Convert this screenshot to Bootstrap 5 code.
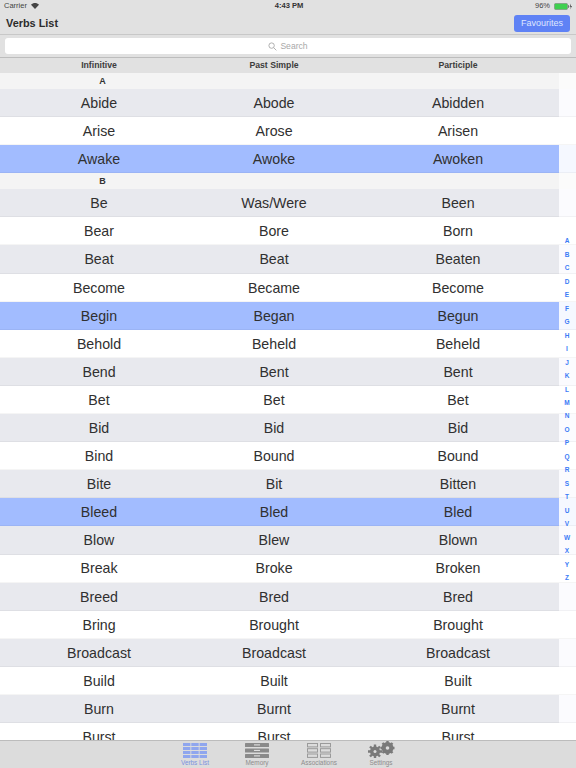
<!DOCTYPE html>
<html lang="en">
<head>
  <meta charset="UTF-8">
  <title>Verbs List</title>
  <meta name="viewport" content="width=device-width, initial-scale=1">
  <link href="https://cdn.jsdelivr.net/npm/bootstrap@5.3.3/dist/css/bootstrap.min.css" rel="stylesheet">
  <style>
    html, body { height: 768px; overflow: hidden; }
    body { font-family: "Liberation Sans", Arial, sans-serif; background: #fff; color: #222; position: relative; }
    .screen { height: 768px; }
    .top-area { background: #e1e1e1; }
    .status-line { height: 12px; padding: 0 4px; font-size: 7.5px; color: #444; }
    .status-line > div { flex: 1 1 0; }
    .status-time { font-weight: 700; font-size: 7.6px; text-align: center; color: #333; padding-left: 2px; }
    .title-line { height: 22px; padding: 0 6px; }
    .page-title { font-size: 10.9px; font-weight: 700; color: #2c2c2c; }
    .fav-btn { background: #5f82f5; color: #dfe7ff; font-size: 9px; width: 56px; height: 17px; border-radius: 3px; line-height: 17px; padding: 0; border: 0; }
    .search-line { background: #e1e1e1; border-top: 1px solid #c8c8c8; border-bottom: 1px solid #bdbdbd; height: 24px; padding: 3px 5px; }
    .search-box { background: #fff; height: 16px; border-radius: 3px; color: #a8a8a8; font-size: 8.6px; gap: 3px; }
    .col-heads { background: #e1e1e1; height: 15px; font-size: 8.7px; font-weight: 700; color: #3c3c3c; padding-right: 10px; }
    .list-wrap { flex: 1 1 0; overflow: hidden; min-height: 0; }
    .cell-a { width: 198px; text-align: center; }
    .cell-b { width: 152px; text-align: center; }
    .cell-c { width: 216px; text-align: center; }
    .verb-row { height: 28.1px; font-size: 14.2px; color: #303030; padding-right: 10px; line-height: 1; box-shadow: inset 0 -1px 0 rgba(0,0,0,.04); }
    .tone-grey { background: linear-gradient(to right, #e8e9ee 559px, #fbfbfe 559px); }
    .tone-white { background: #fff; }
    .tone-blue { background: linear-gradient(to right, #a2bcff 559px, #f5f8ff 559px); }
    .sect-row { height: 16px; background: linear-gradient(to right, #f4f4f4 559px, #fbfbfb 559px); font-size: 9px; font-weight: 700; color: #333; line-height: 17px; }
    .sect-row span { display: block; width: 205px; text-align: center; }
    .az-index { position: absolute; right: 5px; top: 234.4px; width: 8px; font-size: 6.5px; font-weight: 700; color: #3b7bf6; text-align: center; }
    .az-index div { height: 13.48px; line-height: 13.48px; }
    .tab-strip { height: 28px; background: #dcdcdc; border-top: 1px solid #bcbcbc; font-size: 6.4px; color: #8c8c8c; padding-left: 164px; }
    .tab-item { width: 62px; text-align: center; }
    .tab-item svg { display: block; margin: 2px auto 0; }
    .tab-item.on { color: #7a92e0; }
    .tab-label { line-height: 7px; margin-top: 1px; }
    .tab-item svg.gear-icon { margin-top: 0; }
  </style>
</head>
<body>
<div class="screen d-flex flex-column">
  <div class="top-area">
    <div class="status-line d-flex align-items-center">
      <div class="d-flex align-items-center gap-1">Carrier
        <svg width="8" height="6" viewBox="0 0 16 12"><path d="M8 12 L0 3.5 C4.5 -1 11.5 -1 16 3.5 Z" fill="#444"/></svg>
      </div>
      <div class="status-time">4:43 PM</div>
      <div class="d-flex align-items-center justify-content-end gap-1">96%
        <svg width="18" height="7" viewBox="0 0 18 7"><rect x=".5" y=".5" width="13" height="6" rx="1" fill="#3fd04f" stroke="#777" stroke-width=".5"/><rect x="14" y="2.2" width="1" height="2.6" fill="#777"/><path d="M17 .5 L15.6 3.8 H16.8 L16.2 6.5 L18 3 H16.8 Z" fill="#444"/></svg>
      </div>
    </div>
    <div class="title-line d-flex align-items-center justify-content-between">
      <div class="page-title">Verbs List</div>
      <button class="btn fav-btn">Favourites</button>
    </div>
    <div class="search-line">
      <div class="search-box d-flex align-items-center justify-content-center">
        <svg width="9" height="9" viewBox="0 0 10 10" fill="none" stroke="#a8a8a8"><circle cx="4" cy="4" r="3"/><path d="M6.3 6.3 L9.3 9.3"/></svg>
        Search
      </div>
    </div>
    <div class="col-heads d-flex align-items-center">
      <div class="cell-a">Infinitive</div><div class="cell-b">Past Simple</div><div class="cell-c">Participle</div>
    </div>
  </div>
  <div class="list-wrap" id="list"></div>
  <div class="tab-strip d-flex">
    <div class="tab-item on"><svg width="24" height="15" viewBox="0 0 24 15"><g fill="#8fa6ee"><rect width="7.4" height="3"/><rect x="8.3" width="7.4" height="3"/><rect x="16.6" width="7.4" height="3"/><rect y="4" width="7.4" height="3"/><rect x="8.3" y="4" width="7.4" height="3"/><rect x="16.6" y="4" width="7.4" height="3"/><rect y="8" width="7.4" height="3"/><rect x="8.3" y="8" width="7.4" height="3"/><rect x="16.6" y="8" width="7.4" height="3"/><rect y="12" width="7.4" height="3"/><rect x="8.3" y="12" width="7.4" height="3"/><rect x="16.6" y="12" width="7.4" height="3"/></g></svg><div class="tab-label">Verbs List</div></div>
    <div class="tab-item"><svg width="24" height="15" viewBox="0 0 24 15"><g fill="#8a8a8a"><rect width="24" height="4" rx=".5"/><rect y="5.5" width="24" height="4" rx=".5"/><rect y="11" width="24" height="4" rx=".5"/></g><g fill="#e8e8e8"><rect x="9" y="1.4" width="6" height="1"/><rect x="9" y="6.9" width="6" height="1"/><rect x="9" y="12.4" width="6" height="1"/></g></svg><div class="tab-label">Memory</div></div>
    <div class="tab-item"><svg width="24" height="15" viewBox="0 0 24 15"><g fill="none" stroke="#9a9a9a"><rect x=".5" y=".5" width="10" height="3.4"/><rect x=".5" y="5.7" width="10" height="3.4"/><rect x=".5" y="11" width="10" height="3.4"/><rect x="13.5" y=".5" width="10" height="3.4"/><rect x="13.5" y="5.7" width="10" height="3.4"/><rect x="13.5" y="11" width="10" height="3.4"/></g></svg><div class="tab-label">Associations</div></div>
    <div class="tab-item"><svg class="gear-icon" width="29" height="17" viewBox="0 0 29 17"><g fill="#7a7a7a"><circle cx="8" cy="10.5" r="5"/><circle cx="20.5" cy="7" r="6"/></g><g stroke="#7a7a7a" stroke-width="2.4"><path d="M8 3.5v14M1 10.5h14M3 5.5l10 10M13 5.5l-10 10"/><path d="M20.5 0v14M13.5 7h14M15.5 2l10 10M25.5 2l-10 10"/></g><circle cx="8" cy="10.5" r="1.5" fill="#dcdcdc"/><circle cx="20.5" cy="7" r="1.8" fill="#dcdcdc"/></svg><div class="tab-label">Settings</div></div>
  </div>
</div>
<div class="az-index" id="az"></div>
<script>
  const verbs = [
    ["#", "A"],
    ["Abide","Abode","Abidden","g"],["Arise","Arose","Arisen","w"],["Awake","Awoke","Awoken","b"],
    ["#", "B"],
    ["Be","Was/Were","Been","g"],["Bear","Bore","Born","w"],["Beat","Beat","Beaten","g"],["Become","Became","Become","w"],
    ["Begin","Began","Begun","b"],["Behold","Beheld","Beheld","w"],["Bend","Bent","Bent","g"],["Bet","Bet","Bet","w"],
    ["Bid","Bid","Bid","g"],["Bind","Bound","Bound","w"],["Bite","Bit","Bitten","g"],["Bleed","Bled","Bled","b"],
    ["Blow","Blew","Blown","g"],["Break","Broke","Broken","w"],["Breed","Bred","Bred","g"],["Bring","Brought","Brought","w"],
    ["Broadcast","Broadcast","Broadcast","g"],["Build","Built","Built","w"],["Burn","Burnt","Burnt","g"],["Burst","Burst","Burst","w"]
  ];
  const tones = { g: "tone-grey", w: "tone-white", b: "tone-blue" };
  document.getElementById("list").innerHTML = verbs.map(v => {
    if (v[0] === "#") return `<div class="sect-row"><span>${v[1]}</span></div>`;
    return `<div class="verb-row d-flex align-items-center ${tones[v[3]]}"><div class="cell-a">${v[0]}</div><div class="cell-b">${v[1]}</div><div class="cell-c">${v[2]}</div></div>`;
  }).join("");
  document.getElementById("az").innerHTML = "ABCDEFGHIJKLMNOPQRSTUVWXYZ".split("").map(c => `<div>${c}</div>`).join("");
</script>
<script src="https://cdn.jsdelivr.net/npm/bootstrap@5.3.3/dist/js/bootstrap.bundle.min.js"></script>
</body>
</html>
